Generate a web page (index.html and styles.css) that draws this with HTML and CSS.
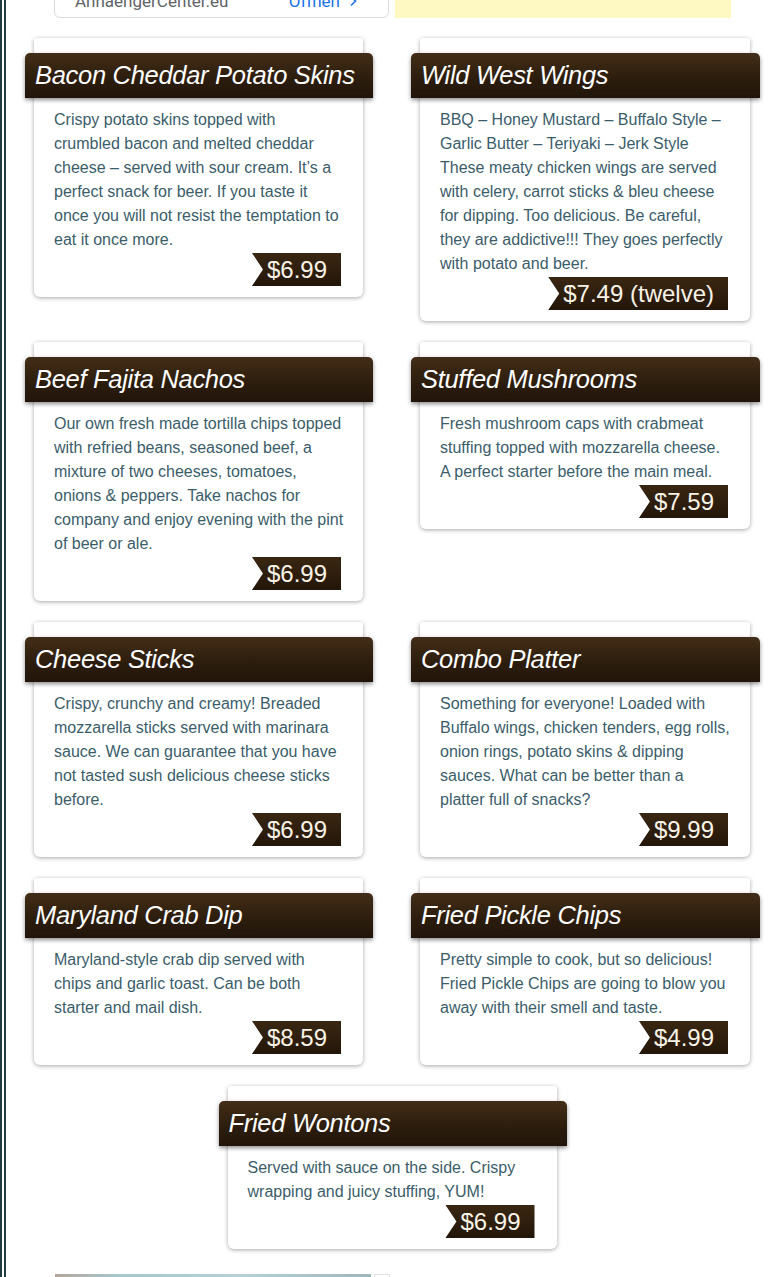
FILE: index.html
```html
<!DOCTYPE html>
<html lang="en">
<head>
<meta charset="utf-8">
<title>Appetizers</title>
<link rel="stylesheet" href="styles.css">
</head>
<body>
<div class="page">
  <div class="ads">
    <div class="ad-link">
      <span class="ad-name">AnhaengerCenter.eu</span>
      <span class="ad-open">Öffnen <svg width="10" height="12" viewBox="0 0 10 12"><path d="M3 1.5 L7.5 6 L3 10.5" fill="none" stroke="#1a73e8" stroke-width="1.6"/></svg></span>
    </div>
    <div class="ad-yellow"></div>
  </div>

  <div class="menu">
    <div class="card">
      <h2 class="card-title">Bacon Cheddar Potato Skins</h2>
      <p class="card-text">Crispy potato skins topped with crumbled bacon and melted cheddar cheese – served with sour cream. It’s a perfect snack for beer. If you taste it once you will not resist the temptation to eat it once more.</p>
      <div class="price-row"><span class="price">$6.99</span></div>
    </div>
    <div class="card">
      <h2 class="card-title">Wild West Wings</h2>
      <p class="card-text">BBQ – Honey Mustard – Buffalo Style – Garlic Butter – Teriyaki – Jerk Style These meaty chicken wings are served with celery, carrot sticks &amp; bleu cheese for dipping. Too delicious. Be careful, they are addictive!!! They goes perfectly with potato and beer.</p>
      <div class="price-row"><span class="price">$7.49 (twelve)</span></div>
    </div>

    <div class="card">
      <h2 class="card-title">Beef Fajita Nachos</h2>
      <p class="card-text">Our own fresh made tortilla chips topped with refried beans, seasoned beef, a mixture of two cheeses, tomatoes, onions &amp; peppers. Take nachos for company and enjoy evening with the pint of beer or ale.</p>
      <div class="price-row"><span class="price">$6.99</span></div>
    </div>
    <div class="card">
      <h2 class="card-title">Stuffed Mushrooms</h2>
      <p class="card-text">Fresh mushroom caps with crabmeat stuffing topped with mozzarella cheese. A perfect starter before the main meal.</p>
      <div class="price-row"><span class="price">$7.59</span></div>
    </div>

    <div class="card">
      <h2 class="card-title">Cheese Sticks</h2>
      <p class="card-text">Crispy, crunchy and creamy! Breaded mozzarella sticks served with marinara sauce. We can guarantee that you have not tasted sush delicious cheese sticks before.</p>
      <div class="price-row"><span class="price">$6.99</span></div>
    </div>
    <div class="card">
      <h2 class="card-title">Combo Platter</h2>
      <p class="card-text">Something for everyone! Loaded with Buffalo wings, chicken tenders, egg rolls, onion rings, potato skins &amp; dipping sauces. What can be better than a platter full of snacks?</p>
      <div class="price-row"><span class="price">$9.99</span></div>
    </div>

    <div class="card">
      <h2 class="card-title">Maryland Crab Dip</h2>
      <p class="card-text">Maryland-style crab dip served with chips and garlic toast. Can be both starter and mail dish.</p>
      <div class="price-row"><span class="price">$8.59</span></div>
    </div>
    <div class="card">
      <h2 class="card-title">Fried Pickle Chips</h2>
      <p class="card-text">Pretty simple to cook, but so delicious! Fried Pickle Chips are going to blow you away with their smell and taste.</p>
      <div class="price-row"><span class="price">$4.99</span></div>
    </div>

    <div class="card card-center">
      <h2 class="card-title">Fried Wontons</h2>
      <p class="card-text">Served with sauce on the side. Crispy wrapping and juicy stuffing, YUM!</p>
      <div class="price-row"><span class="price">$6.99</span></div>
    </div>
  </div>

  <div class="ad-bottom">
    <div class="ad-image"></div>
    <div class="ad-icons"></div>
  </div>
</div>
</body>
</html>
```

FILE: styles.css
```css
* { box-sizing: border-box; }

html, body {
  margin: 0;
  padding: 0;
  background: #ffffff;
  overflow: hidden;
}

body {
  font-family: "Liberation Sans", Arial, sans-serif;
}

.page {
  border-left: 6px double #233b42;
  min-height: 1277px;
  padding-left: 28px;
  width: 770px;
}

.ads {
  display: flex;
  gap: 6px;
  margin-top: -23px;
  padding-left: 20px;
  height: 41px;
}

.ad-link {
  width: 335px;
  height: 41px;
  border: 1px solid #dadce0;
  border-radius: 0 0 6px 6px;
  display: flex;
  align-items: center;
  justify-content: space-between;
  padding: 6px 30px 0 20px;
  font-family: Roboto, "Liberation Sans", sans-serif;
  font-size: 17px;
}

.ad-name { color: #5f6368; }
.ad-open { color: #1a73e8; display: flex; align-items: center; gap: 8px; }

.ad-yellow {
  width: 336px;
  height: 41px;
  background: #fef9c3;
}

.menu {
  margin-top: 20px;
  display: grid;
  grid-template-columns: 329px 330px;
  column-gap: 57px;
  row-gap: 21px;
  align-items: start;
}

.card {
  background: #ffffff;
  border-radius: 3px 3px 6px 6px;
  box-shadow: 0 1px 4px rgba(0, 0, 0, 0.35);
  padding: 15px 19px 11px 20px;
}

.card-center {
  grid-column: 1 / span 2;
  justify-self: center;
  width: 329px;
}

.card-title {
  margin: 0 -29px 10px -29px;
  height: 45px;
  padding-left: 10px;
  display: flex;
  align-items: center;
  font-size: 25.5px;
  font-style: italic;
  font-weight: normal;
  color: #ffffff;
  letter-spacing: -0.3px;
  background: linear-gradient(to bottom, #432e18 0%, #2b1c0d 60%, #21150a 100%);
  border-radius: 5px 5px 0 0;
  box-shadow: 0 2px 4px rgba(0, 0, 0, 0.45);
  white-space: nowrap;
}

.card-text {
  margin: 0;
  font-size: 16px;
  line-height: 24px;
  color: #3b5d6a;
}

.price-row {
  display: flex;
  justify-content: flex-end;
  margin-top: 1px;
  margin-right: 3px;
}

.price {
  height: 33px;
  display: flex;
  align-items: center;
  padding: 0 14px 0 15px;
  font-size: 24px;
  color: #f8f3e6;
  background: linear-gradient(to bottom, #3a2713 0%, #2a1b0c 70%, #22160a 100%);
  clip-path: polygon(0 0, 100% 0, 100% 100%, 0 100%, 11px 50%);
  box-shadow: 0 2px 2px rgba(0, 0, 0, 0.4);
}

.ad-bottom {
  margin-top: 25px;
  margin-left: 21px;
  display: flex;
  gap: 3px;
  height: 20px;
}

.ad-image {
  width: 316px;
  height: 20px;
  background: linear-gradient(to right, #b3a69c 0%, #a9c6cc 20%, #b6d0d6 60%, #9fb6bc 100%);
}

.ad-icons {
  width: 16px;
  height: 20px;
  border: 1px solid #e0e0e0;
}
```
